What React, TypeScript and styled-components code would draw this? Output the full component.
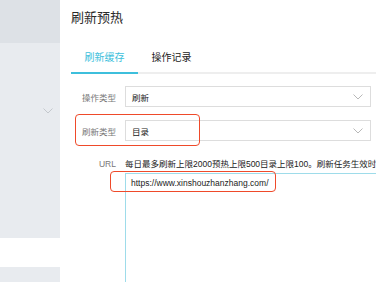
import React from 'react';
import styled, { createGlobalStyle } from 'styled-components';

const GlobalStyle = createGlobalStyle`
  html, body {
    margin: 0;
    padding: 0;
    background: #ffffff;
  }
  body {
    font-family: "Liberation Sans", "Noto Sans CJK SC", sans-serif;
    color: #222222;
  }
`

const Page = styled.div`
  display: flex;
  width: 376px;
  height: 282px;
  overflow: hidden;
  background: #ffffff;
`

const Sidebar = styled.div`
  width: 60px;
  flex-shrink: 0;
  display: flex;
  flex-direction: column;
`

const SideBlock = styled.div<{ $h?: number; $bg: string }>`
  height: ${props => (props.$h ? props.$h + 'px' : 'auto')};
  flex: ${props => (props.$h ? '0 0 auto' : '1')};
  background-color: ${props => props.$bg};
  display: flex;
  justify-content: flex-end;
  align-items: flex-start;
`

const SideArrow = styled.div`
  margin-top: 65px;
  margin-right: 7px;
  display: flex;
`

const Main = styled.div`
  flex: 1;
  min-width: 0;
  padding-left: 11px;
  display: flex;
  flex-direction: column;
`

const Title = styled.div`
  height: 36px;
  line-height: 36px;
  font-size: 13px;
  color: #2a2a2a;
`

const Tabs = styled.div`
  display: flex;
  margin-top: 8px;
  border-bottom: 2px solid #eeeeee;
`

const Tab = styled.div<{ $active?: boolean }>`
  width: 67px;
  height: 28px;
  line-height: 28px;
  text-align: center;
  font-size: 10px;
  color: ${props => (props.$active ? '#3dbfdc' : '#222222')};
  border-bottom: 2px solid ${props => (props.$active ? '#3dbfdc' : 'transparent')};
  margin-bottom: -2px;
`

const Form = styled.div`
  display: flex;
  flex-direction: column;
  gap: 13px;
  margin-top: 12px;
`

const Row = styled.div<{ $top?: boolean }>`
  position: relative;
  display: flex;
  align-items: ${props => (props.$top ? 'flex-start' : 'center')};
`

const Label = styled.div<{ $line?: number }>`
  width: 54px;
  flex-shrink: 0;
  box-sizing: border-box;
  padding-right: 9px;
  text-align: right;
  font-size: 8.5px;
  line-height: ${props => (props.$line ? props.$line + 'px' : 'normal')};
  color: #777777;
`

const Select = styled.div`
  width: 246px;
  height: 21px;
  box-sizing: border-box;
  border: 1px solid #dddddd;
  background: #ffffff;
  display: flex;
  align-items: center;
  justify-content: space-between;
  padding: 0 7px 0 6px;
  font-size: 8.5px;
  color: #222222;
`

const Annotation = styled.div<{ $l: number; $t: number; $w: number; $h: number }>`
  position: absolute;
  left: ${props => props.$l}px;
  top: ${props => props.$t}px;
  width: ${props => props.$w}px;
  height: ${props => props.$h}px;
  box-sizing: border-box;
  border: 1.5px solid #ef4a2a;
  border-radius: 4px;
  pointer-events: none;
`

const FieldCol = styled.div`
  position: relative;
  display: flex;
  flex-direction: column;
  gap: 3px;
`

const Hint = styled.div`
  font-size: 8.5px;
  line-height: 12px;
  white-space: nowrap;
  color: #222222;
`

const UrlBox = styled.div`
  width: 400px;
  height: 200px;
  box-sizing: border-box;
  border: 1.5px solid #9edcea;
  padding: 4px 5px;
  font-size: 8.5px;
  line-height: 10px;
  color: #222222;
`

const Chevron = ({ color }: { color: string }) => (
  <svg width="10" height="6" viewBox="0 0 10 6">
    <polyline points="0.5,0.5 5,5 9.5,0.5" fill="none" stroke={color} strokeWidth="1" />
  </svg>
);

const App = () => {
  return (
    <>
      <GlobalStyle />
      <Page>
        <Sidebar>
          <SideBlock $h={43} $bg="#dde1e6" />
          <SideBlock $h={195} $bg="#e8ebef">
            <SideArrow>
              <Chevron color="#c4c8cd" />
            </SideArrow>
          </SideBlock>
          <SideBlock $h={29} $bg="#ffffff" />
          <SideBlock $bg="#e8ebef" />
        </Sidebar>
        <Main>
          <Title>刷新预热</Title>
          <Tabs>
            <Tab $active>刷新缓存</Tab>
            <Tab>操作记录</Tab>
          </Tabs>
          <Form>
            <Row>
              <Label>操作类型</Label>
              <Select>
                <span>刷新</span>
                <Chevron color="#b8b8b8" />
              </Select>
            </Row>
            <Row>
              <Label>刷新类型</Label>
              <Select>
                <span>目录</span>
                <Chevron color="#b8b8b8" />
              </Select>
              <Annotation $l={4} $t={-6} $w={125} $h={32} />
            </Row>
            <Row $top style={{ marginTop: 4 }}>
              <Label $line={12}>URL</Label>
              <FieldCol>
                <Hint>每日最多刷新上限2000预热上限500目录上限100。刷新任务生效时间约5分钟</Hint>
                <UrlBox>https://www.xinshouzhanzhang.com/</UrlBox>
                <Annotation $l={-15} $t={13} $w={166} $h={21} />
              </FieldCol>
            </Row>
          </Form>
        </Main>
      </Page>
    </>
  );
};

export default App;
